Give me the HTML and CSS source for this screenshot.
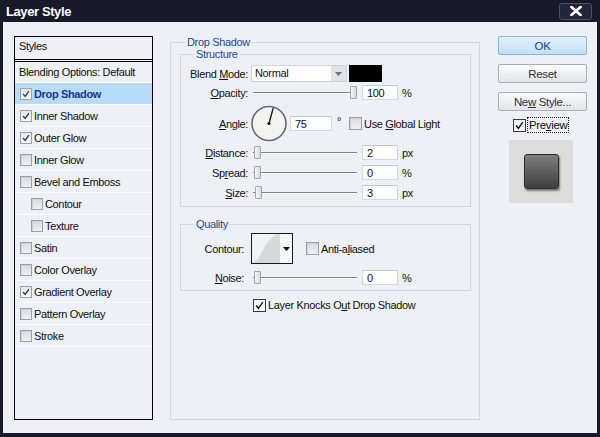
FILE: index.html
```html
<!DOCTYPE html>
<html>
<head>
<meta charset="utf-8">
<title>Layer Style</title>
<link rel="stylesheet" href="styles.css">
</head>
<body>
<div class="window">
  <div class="titlebar">
    <span class="title">Layer Style</span>
    <span class="close"><svg width="12" height="10" viewBox="0 0 12 10"><path d="M1.5 1 L10.5 9 M10.5 1 L1.5 9" stroke="#fff" stroke-width="2.6" stroke-linecap="square"/></svg></span>
  </div>
  <div class="client">
    <div class="styles-list">
      <div class="list-head">Styles</div>
      <div class="list-item plain">Blending Options: Default</div>
      <div class="list-item selected"><span class="cb on"><svg viewBox="0 0 12 12"><path d="M2.5 6 L5 9 L9.5 2.5" fill="none" stroke="#3a3d44" stroke-width="1.6"/></svg></span>Drop Shadow</div>
      <div class="list-item"><span class="cb on"><svg viewBox="0 0 12 12"><path d="M2.5 6 L5 9 L9.5 2.5" fill="none" stroke="#3a3d44" stroke-width="1.6"/></svg></span>Inner Shadow</div>
      <div class="list-item"><span class="cb on"><svg viewBox="0 0 12 12"><path d="M2.5 6 L5 9 L9.5 2.5" fill="none" stroke="#3a3d44" stroke-width="1.6"/></svg></span>Outer Glow</div>
      <div class="list-item"><span class="cb"></span>Inner Glow</div>
      <div class="list-item"><span class="cb"></span>Bevel and Emboss</div>
      <div class="list-item sub"><span class="cb"></span>Contour</div>
      <div class="list-item sub"><span class="cb"></span>Texture</div>
      <div class="list-item"><span class="cb"></span>Satin</div>
      <div class="list-item"><span class="cb"></span>Color Overlay</div>
      <div class="list-item"><span class="cb on"><svg viewBox="0 0 12 12"><path d="M2.5 6 L5 9 L9.5 2.5" fill="none" stroke="#3a3d44" stroke-width="1.6"/></svg></span>Gradient Overlay</div>
      <div class="list-item"><span class="cb"></span>Pattern Overlay</div>
      <div class="list-item"><span class="cb"></span>Stroke</div>
    </div>

    <fieldset class="panel">
      <legend class="legend-main">Drop Shadow</legend>
      <fieldset class="group structure">
        <legend class="legend-sub">Structure</legend>
        <div class="row">
          <span class="lbl">Blend <u>M</u>ode:</span>
          <span class="select"><span class="select-val">Normal</span><span class="select-btn"><svg width="7" height="4" viewBox="0 0 7 4"><path d="M0 0 H7 L3.5 4 Z" fill="#6a6e75"/></svg></span></span>
          <span class="swatch"></span>
        </div>
        <div class="row gap2">
          <span class="lbl"><u>O</u>pacity:</span>
          <span class="slider"><span class="thumb" style="left:97px"></span></span>
          <span class="field">100</span>
          <span class="unit">%</span>
        </div>
        <div class="row angle gap2">
          <span class="lbl"><u>A</u>ngle:</span>
          <svg class="dial" width="37" height="41" viewBox="0 0 37 41"><circle cx="18" cy="20.5" r="17" fill="#f3f3ef" stroke="#646a76" stroke-width="1.6"/><path d="M18 20.5 L22.2 5" stroke="#111" stroke-width="1.3"/><circle cx="18" cy="20.5" r="1.6" fill="#111"/></svg>
          <span class="field wide">75</span>
          <span class="unit deg">°</span>
          <span class="cb plainbox"></span>
          <span class="cb-text">Use <u>G</u>lobal Light</span>
        </div>
        <div class="row">
          <span class="lbl"><u>D</u>istance:</span>
          <span class="slider"><span class="thumb" style="left:1px"></span></span>
          <span class="field">2</span>
          <span class="unit">px</span>
        </div>
        <div class="row gap3">
          <span class="lbl">Sp<u>r</u>ead:</span>
          <span class="slider"><span class="thumb" style="left:1px"></span></span>
          <span class="field">0</span>
          <span class="unit">%</span>
        </div>
        <div class="row gap3">
          <span class="lbl"><u>S</u>ize:</span>
          <span class="slider"><span class="thumb" style="left:2px"></span></span>
          <span class="field">3</span>
          <span class="unit">px</span>
        </div>
      </fieldset>

      <fieldset class="group quality">
        <legend class="legend-sub">Quality</legend>
        <div class="row contour-row">
          <span class="lbl q">Contour:</span>
          <span class="contour">
            <svg width="28" height="29" viewBox="0 0 28 29"><rect width="28" height="29" fill="#f1f2f4"/><path d="M0 29 C 9 29, 13 1, 28 0 L28 29 Z" fill="#d6d8dc"/></svg>
            <span class="contour-btn"><svg width="7" height="4" viewBox="0 0 7 4"><path d="M0 0 H7 L3.5 4 Z" fill="#111"/></svg></span>
          </span>
          <span class="cb plainbox aa"></span>
          <span class="cb-text">Anti-a<u>l</u>iased</span>
        </div>
        <div class="row noise-row">
          <span class="lbl q"><u>N</u>oise:</span>
          <span class="slider"><span class="thumb" style="left:1px"></span></span>
          <span class="field">0</span>
          <span class="unit">%</span>
        </div>
      </fieldset>

      <div class="row knock">
        <span class="cb dark"><svg viewBox="0 0 13 13"><path d="M2.5 6.5 L5.2 9.8 L10.5 2.5" fill="none" stroke="#111" stroke-width="1.6"/></svg></span>
        <span class="cb-text">Layer Knocks O<u>u</u>t Drop Shadow</span>
      </div>
    </fieldset>

    <div class="actions">
      <div class="btn ok"><span>OK</span></div>
      <div class="btn"><span>Reset</span></div>
      <div class="btn"><span>Ne<u>w</u> Style...</span></div>
      <div class="preview-row">
        <span class="cb dark"><svg viewBox="0 0 13 13"><path d="M2.5 6.5 L5.2 9.8 L10.5 2.5" fill="none" stroke="#111" stroke-width="1.6"/></svg></span>
        <span class="focus">Pre<u>v</u>iew</span>
      </div>
      <div class="preview-box"><div class="preview-square"></div></div>
    </div>
  </div>
</div>
</body>
</html>
```

FILE: styles.css
```css
* { box-sizing: border-box; }
html, body { margin: 0; padding: 0; }
body {
  width: 600px;
  height: 437px;
  overflow: hidden;
  font-family: "Liberation Sans", Arial, sans-serif;
  font-size: 11px;
  letter-spacing: -0.35px;
  color: #111;
}
u { text-decoration: underline; text-underline-offset: 1px; }

.window {
  width: 600px;
  height: 437px;
  background: #181a2b;
  display: flex;
  flex-direction: column;
}
.titlebar {
  height: 22px;
  flex: none;
  display: flex;
  align-items: center;
  justify-content: space-between;
  padding: 0 8px 0 6px;
}
.title {
  color: #fff;
  font-weight: bold;
  font-size: 13px;
  letter-spacing: -0.4px;
}
.close {
  width: 33px;
  height: 17px;
  border: 1px solid #4c5064;
  border-radius: 3px;
  background: #23253a;
  display: flex;
  align-items: center;
  justify-content: center;
}
.client {
  flex: 1;
  margin: 0 3px 4px 3px;
  background: #edf0f4;
  display: flex;
  align-items: stretch;
  padding: 14px 0 13px 11px;
}

/* styles list */
.styles-list {
  width: 139px;
  flex: none;
  border: 1px solid #000;
  display: flex;
  flex-direction: column;
}
.list-head {
  height: 23px;
  border-bottom: 1px solid #000;
  padding-left: 4px;
  line-height: 19px;
}
.list-item {
  height: 22px;
  display: flex;
  align-items: center;
  padding-left: 5px;
  border-bottom: 1px solid #fbfcfd;
  white-space: nowrap;
}
.list-item.plain {
  margin-top: 1px;
  border-top: 1px solid #000;
  padding-left: 4px;
}
.list-item.sub { padding-left: 16px; }
.list-item.selected {
  background: #b8dbf7;
  color: #15368e;
  font-weight: bold;
}

.cb {
  width: 12px;
  height: 12px;
  flex: none;
  margin-right: 2px;
  border: 1px solid #9aa0a8;
  background: linear-gradient(#d9dbdf, #eef0f2);
  box-shadow: inset 1px 1px 0 #cdd0d5;
  display: flex;
}
.cb.on { background: linear-gradient(#e7e9ec, #f4f5f7); box-shadow: none; }
.cb svg { width: 100%; height: 100%; }
.cb.dark {
  width: 13px;
  height: 13px;
  border: 1px solid #3a3a3a;
  background: #f6f7f8;
  box-shadow: none;
}

/* middle panel */
fieldset { margin: 0; min-width: 0; }
.panel {
  width: 310px;
  flex: none;
  margin-left: 17px;
  border: 1px solid #d3d8df;
  padding: 0 8px 0 9px;
}
legend {
  color: #1b4a98;
  line-height: 12px;
  padding: 0 2px;
}
.legend-main { margin-left: 5px; }
.legend-sub { margin-left: 13px; }

.group {
  border: 1px solid #d3d8df;
  padding: 5px 0 5px 0;
}
.quality {
  margin-top: 11px;
  padding: 3px 0 4px 0;
}

.row {
  display: flex;
  align-items: center;
  height: 17px;
  white-space: nowrap;
}
.gap2 { margin-top: 2px; }
.gap3 { margin-top: 3px; }
.row.angle { height: 41px; }
.lbl {
  width: 67px;
  margin-right: 3px;
  text-align: right;
  flex: none;
}
.lbl.q { width: 63px; margin-right: 7px; }

.select {
  width: 96px;
  height: 17px;
  border: 1px solid #cbd4de;
  background: #fff;
  display: flex;
}
.select-val { flex: 1; padding-left: 3px; line-height: 15px; }
.select-btn {
  width: 15px;
  background: #dfe2e6;
  display: flex;
  align-items: center;
  justify-content: center;
}
.swatch {
  width: 33px;
  height: 17px;
  margin-left: 2px;
  background: #000;
}

.slider {
  position: relative;
  width: 104px;
  height: 17px;
  margin-left: 2px;
  flex: none;
}
.slider::before {
  content: "";
  position: absolute;
  left: 0;
  right: 0;
  top: 8px;
  height: 1px;
  background: #7f848c;
  box-shadow: 0 1px 0 #fff;
}
.thumb {
  position: absolute;
  top: 2px;
  width: 7px;
  height: 13px;
  border: 1px solid #a2a7ae;
  border-radius: 1px;
  background: linear-gradient(90deg, #f6f6f6, #d8d9db);
}
.field {
  width: 36px;
  height: 15px;
  margin-left: 5px;
  border: 1px solid #d0d9e3;
  border-top-color: #c0cad6;
  background: #fff;
  padding-left: 4px;
  line-height: 14px;
  flex: none;
}
.field.wide { width: 42px; margin-left: 2px; }
.unit { margin-left: 4px; }
.unit.deg { margin-left: 5px; margin-right: 8px; align-self: flex-start; margin-top: 12px; }
.dial { flex: none; }

.plainbox { width: 13px; height: 13px; margin-right: 2px; }

.contour-row { height: 31px; }
.noise-row { margin-top: 5px; }
.contour {
  width: 42px;
  height: 31px;
  border: 1px solid #1a1a1a;
  display: flex;
  background: #fff;
  flex: none;
}
.contour-btn {
  flex: 1;
  display: flex;
  align-items: center;
  justify-content: center;
  background: #f7f8f9;
}
.aa { margin-left: 13px; }

.knock {
  margin-top: 7px;
  padding-left: 73px;
  height: 14px;
}

/* right column */
.actions {
  width: 89px;
  flex: none;
  margin-left: 18px;
  display: flex;
  flex-direction: column;
}
.btn {
  height: 19px;
  border: 1px solid #a9aeb5;
  border-radius: 2px;
  background: linear-gradient(#fbfbfc, #e1e4e8);
  display: flex;
  align-items: center;
  justify-content: center;
  color: #333;
  font-size: 11.5px;
}
.btn + .btn { margin-top: 9px; }
.btn.ok {
  background: linear-gradient(#e2f1fd, #c3e0f8);
  border-color: #8db3dc;
  color: #1d3f8f;
}
.preview-row {
  margin-top: 6px;
  padding-left: 15px;
  display: flex;
  align-items: center;
  height: 16px;
  font-size: 11.5px;
}
.preview-row .cb { margin-right: 1px; }
.focus {
  border: 1px dotted #222;
  padding: 0 1px;
  line-height: 14px;
}
.preview-box {
  width: 64px;
  height: 63px;
  margin: 7px 0 0 11px;
  background: #dcdcdc;
  display: flex;
  align-items: center;
  justify-content: center;
}
.preview-square {
  width: 35px;
  height: 35px;
  border: 1px solid #2c2c2c;
  border-radius: 3px;
  background: linear-gradient(#7e7e7e, #3f3f3f);
  box-shadow: 1px 2px 2px rgba(0, 0, 0, 0.45);
}
```
